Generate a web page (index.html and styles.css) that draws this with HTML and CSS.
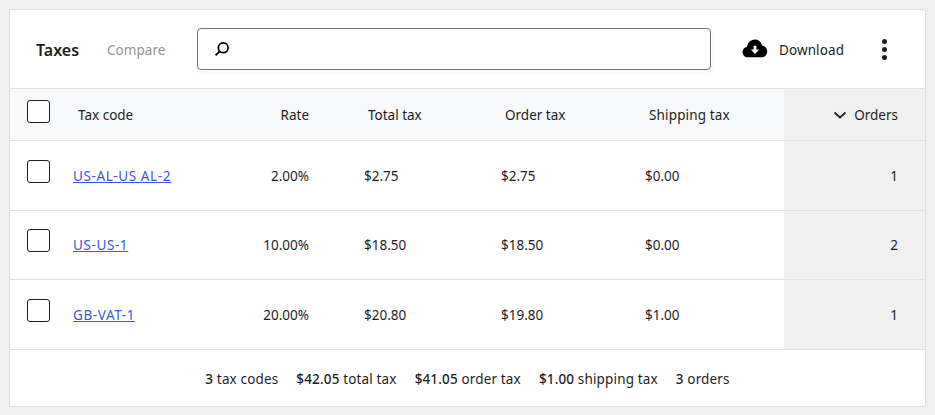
FILE: index.html
```html
<!DOCTYPE html>
<html>
<head>
<meta charset="utf-8">
<title>Taxes</title>
<link rel="stylesheet" href="styles.css">
</head>
<body>
<div class="card">
	<div class="cardHeader">
		<span class="tabTitle">Taxes</span>
		<span class="tabCompare">Compare</span>
		<div class="searchBox">
			<svg class="searchIcon" width="18" height="18" viewBox="0 0 18 18"><circle cx="10.2" cy="7.8" r="4.9" fill="none" stroke="#000" stroke-width="1.8"/><path d="M6.6 11.4L2.6 15.4" stroke="#000" stroke-width="2" fill="none"/></svg>
		</div>
		<div class="download">
			<svg width="26" height="20" viewBox="0 0 26 20"><path fill="#000" d="M13 0.5c3.6 0 6.4 2.5 7 5.9 3 .3 5.2 2.9 5.2 6 0 3.300-2.600 5.900-5.900 5.900H5.800C2.800 18.300.5 15.900.5 13c0-2.600 1.900-4.800 4.400-5.300C5.800 3.500 9 .5 13 .5z"/><path fill="#fff" d="M11.600 6.800h2.800v3.700h2.800L13 15l-4.200-4.500h2.800z"/></svg>
			<span class="downloadLabel">Download</span>
		</div>
		<div class="moreBtn"><i></i><i></i><i></i></div>
	</div>
	<table class="taxTable">
		<colgroup>
			<col class="colCheck"><col class="colCode"><col class="colRate"><col class="colTotal"><col class="colOrder"><col class="colShip"><col class="colOrders">
		</colgroup>
		<thead>
			<tr>
				<th class="checkCell"><span class="checkbox"></span></th>
				<th class="codeHead">Tax code</th>
				<th class="num">Rate</th>
				<th class="moneyHead">Total tax</th>
				<th class="moneyHead">Order tax</th>
				<th class="moneyHead shipHead">Shipping tax</th>
				<th class="num sorted">
					<svg class="chevron" width="14" height="14" viewBox="0 0 14 14"><path d="M1.500 4.500L7 9.500l5.500-5" fill="none" stroke="#1e1e1e" stroke-width="1.700"/></svg>Orders
				</th>
			</tr>
		</thead>
		<tbody>
			<tr>
				<td class="checkCell"><span class="checkbox"></span></td>
				<td><a href="#">US-AL-US AL-2</a></td>
				<td class="num">2.00%</td>
				<td class="money">$2.75</td>
				<td class="money">$2.75</td>
				<td class="money">$0.00</td>
				<td class="num sorted">1</td>
			</tr>
			<tr>
				<td class="checkCell"><span class="checkbox"></span></td>
				<td><a href="#">US-US-1</a></td>
				<td class="num">10.00%</td>
				<td class="money">$18.50</td>
				<td class="money">$18.50</td>
				<td class="money">$0.00</td>
				<td class="num sorted">2</td>
			</tr>
			<tr>
				<td class="checkCell"><span class="checkbox"></span></td>
				<td><a href="#">GB-VAT-1</a></td>
				<td class="num">20.00%</td>
				<td class="money">$20.80</td>
				<td class="money">$19.80</td>
				<td class="money">$1.00</td>
				<td class="num sorted">1</td>
			</tr>
		</tbody>
	</table>
	<div class="summary">
		<span><b>3</b> tax codes</span>
		<span><b>$42.05</b> total tax</span>
		<span><b>$41.05</b> order tax</span>
		<span><b>$1.00</b> shipping tax</span>
		<span><b>3</b> orders</span>
	</div>
</div>
</body>
</html>
```

FILE: styles.css
```css
html, body {
    margin: 0;
    padding: 0;
}
body {
    background: #f0f0f0;
    padding: 9px;
    font-family: "Noto Sans", sans-serif;
    font-size: 13.5px;
    color: #1e1e1e;
}
.card {
    width: 915px;
    background: #ffffff;
    border: 1px solid #e0e0e0;
    border-radius: 2px;
}
.cardHeader {
    display: flex;
    align-items: center;
    height: 78px;
    padding-left: 26px;
}
.tabTitle {
    font-size: 16px;
    font-weight: 600;
    width: 71px;
    padding-top: 1px;
}
.tabCompare {
    color: #949494;
    width: 90px;
    padding-top: 2px;
    letter-spacing: 0.05px;
}
.searchBox {
    display: flex;
    align-items: center;
    box-sizing: border-box;
    width: 514px;
    height: 42px;
    border: 1px solid #757575;
    border-radius: 4px;
    padding-left: 15px;
    box-shadow: 0 2px 6px rgba(0, 0, 0, 0.05);
}
.download {
    display: flex;
    align-items: center;
    gap: 11px;
    margin-left: 31px;
}
.downloadLabel {
    padding-top: 2px;
    letter-spacing: 0.1px;
}
.moreBtn {
    display: flex;
    flex-direction: column;
    gap: 3px;
    margin-left: 38px;
}
.moreBtn i {
    display: block;
    width: 5px;
    height: 5px;
    border-radius: 50%;
    background: #1e1e1e;
}
.taxTable {
    width: 915px;
    table-layout: fixed;
    border-collapse: collapse;
}
.colCheck { width: 63px; }
.colCode { width: 147px; }
.colRate { width: 116px; }
.colTotal { width: 137px; }
.colOrder { width: 144px; }
.colShip { width: 167px; }
.colOrders { width: 141px; }
th, td {
    padding: 0;
    font-weight: normal;
    text-align: left;
    border-top: 1px solid #e0e0e0;
}
td {
    padding-top: 1px;
}
thead tr {
    height: 52px;
    background: #f8f9fa;
}
tbody tr {
    height: 69.5px;
}
.checkCell {
    padding-left: 17px;
}
td.checkCell {
    padding-top: 0;
}
.checkbox {
    display: block;
    box-sizing: border-box;
    width: 23px;
    height: 23px;
    background: #ffffff;
    border: 1px solid #1e1e1e;
    border-radius: 3px;
}
thead .checkbox {
    margin-bottom: 7px;
}
tbody .checkbox {
    margin-bottom: 8px;
}
.codeHead {
    padding-left: 5px;
}
.num {
    text-align: right;
    padding-right: 27px;
}
.money {
    padding-left: 28px;
}
.moneyHead {
    padding-left: 32px;
}
.shipHead {
    letter-spacing: 0.15px;
}
.sorted {
    background: #f0f0f0;
}
.chevron {
    margin-right: 7px;
    vertical-align: -2px;
}
a {
    color: #3858e9;
    letter-spacing: 0.6px;
}
.summary {
    display: flex;
    justify-content: center;
    align-items: center;
    gap: 18px;
    height: 54px;
    padding-top: 2px;
    border-top: 1px solid #e0e0e0;
    letter-spacing: 0.15px;
}
.summary b {
    font-weight: 500;
}
```
